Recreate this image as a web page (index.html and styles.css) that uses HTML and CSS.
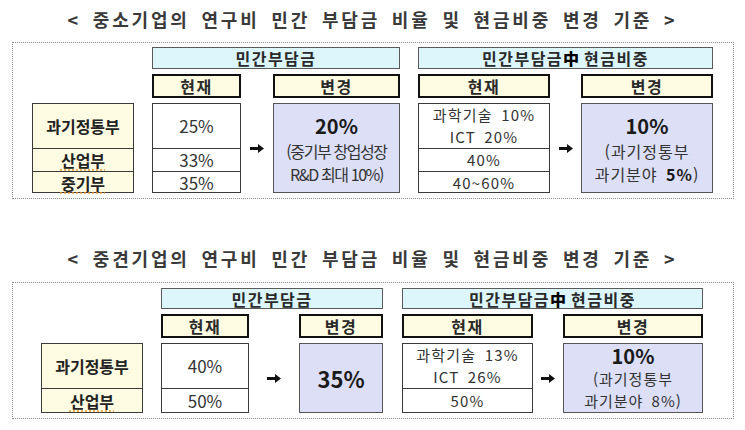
FILE: index.html
```html
<!DOCTYPE html>
<html lang="ko">
<head>
<meta charset="utf-8">
<link rel="stylesheet" href="styles.css">
</head>
<body>
<div class="page">
  <h2 class="title title1">&lt; 중소기업의 연구비 민간 부담금 비율 및 현금비중 변경 기준 &gt;</h2>
  <section class="panel p1">
    <div class="hd-main g1">민간부담금</div>
    <div class="hd-main g2">민간부담금<b>中</b> 현금비중</div>
    <div class="hd-sub c3">현재</div>
    <div class="hd-sub c5">변경</div>
    <div class="hd-sub c7">현재</div>
    <div class="hd-sub c9">변경</div>

    <div class="box labels c1">
      <div class="cell">과기정통부</div>
      <div class="cell"><span class="sq">산업부</span></div>
      <div class="cell"><span class="sq">중기부</span></div>
    </div>
    <div class="box data c3">
      <div class="cell">25%</div>
      <div class="cell">33%</div>
      <div class="cell">35%</div>
    </div>
    <div class="arrow c4"><svg width="14" height="9" viewBox="0 0 14 9"><path d="M0 3h8V0l6 4.5-6 4.5V6H0z" fill="#111"/></svg></div>
    <div class="chg c5">
      <div class="big">20%</div>
      <div class="small cond">(중기부 창업성장<br>R&amp;D 최대 10%)</div>
    </div>
    <div class="box data c7">
      <div class="cell wide">과학기술 10%<br>ICT 20%</div>
      <div class="cell wide">40%</div>
      <div class="cell wide">40~60%</div>
    </div>
    <div class="arrow c8"><svg width="14" height="9" viewBox="0 0 14 9"><path d="M0 3h8V0l6 4.5-6 4.5V6H0z" fill="#111"/></svg></div>
    <div class="chg c9">
      <div class="big">10%</div>
      <div class="small wide">(과기정통부<br>과기분야 <b>5%</b>)</div>
    </div>
  </section>

  <h2 class="title title2">&lt; 중견기업의 연구비 민간 부담금 비율 및 현금비중 변경 기준 &gt;</h2>
  <section class="panel p2">
    <div class="hd-main g1">민간부담금</div>
    <div class="hd-main g2">민간부담금<b>中</b> 현금비중</div>
    <div class="hd-sub c3">현재</div>
    <div class="hd-sub c5">변경</div>
    <div class="hd-sub c7">현재</div>
    <div class="hd-sub c9">변경</div>

    <div class="box labels c1">
      <div class="cell">과기정통부</div>
      <div class="cell"><span class="sq">산업부</span></div>
    </div>
    <div class="box data c3">
      <div class="cell">40%</div>
      <div class="cell">50%</div>
    </div>
    <div class="arrow c4"><svg width="14" height="9" viewBox="0 0 14 9"><path d="M0 3h8V0l6 4.5-6 4.5V6H0z" fill="#111"/></svg></div>
    <div class="chg c5">
      <div class="big big2">35%</div>
    </div>
    <div class="box data c7">
      <div class="cell wide">과학기술 13%<br>ICT 26%</div>
      <div class="cell wide">50%</div>
    </div>
    <div class="arrow c8"><svg width="14" height="9" viewBox="0 0 14 9"><path d="M0 3h8V0l6 4.5-6 4.5V6H0z" fill="#111"/></svg></div>
    <div class="chg c9 tight">
      <div class="big">10%</div>
      <div class="small wide">(과기정통부<br>과기분야 8%)</div>
    </div>
  </section>
</div>
</body>
</html>
```

FILE: styles.css
```css
* { box-sizing: border-box; }
html, body { margin: 0; padding: 0; background: #fff; }
body {
  width: 745px;
  height: 430px;
  overflow: hidden;
  font-family: "Noto Sans CJK KR", "Noto Sans", sans-serif;
  color: #222;
}
.page { display: flex; flex-direction: column; }

.title {
  margin: 0;
  height: 38px;
  line-height: 38px;
  text-align: center;
  font-size: 18px;
  font-weight: 700;
  color: #3a3a3a;
  letter-spacing: 2.8px;
  word-spacing: 4px;
}
.title1 { margin-bottom: 4px; }
.title2 { margin-top: 40px; margin-bottom: 5px; }

.panel {
  margin-left: 12px;
  width: 722px;
  border: 1px dotted #8a8a8a;
  display: grid;
  row-gap: 5px;
}
.p1 {
  height: 157px;
  padding: 4px 0 0 19px;
  grid-template-columns: 102px 18px 89px 32px 127px 18px 132px 31px 132px;
  grid-template-rows: 22px 24px 90px;
}
.p2 {
  height: 137px;
  padding: 5px 0 0 28px;
  grid-template-columns: 102px 18px 88px 50px 84px 19px 131px 30px 140px;
  grid-template-rows: 21px 24px 70px;
}

.g1 { grid-column: 3 / 6; grid-row: 1; }
.g2 { grid-column: 7 / 10; grid-row: 1; }
.c1, .c3, .c4, .c5, .c7, .c8, .c9 { grid-row: 3; }
.hd-sub.c3, .hd-sub.c5, .hd-sub.c7, .hd-sub.c9 { grid-row: 2; }
.c1 { grid-column: 1; }
.c3 { grid-column: 3; }
.c4 { grid-column: 4; }
.c5 { grid-column: 5; }
.c7 { grid-column: 7; }
.c8 { grid-column: 8; }
.c9 { grid-column: 9; }

.hd-main {
  background: #dcf6fb;
  border: 1px solid #5a5a5a;
  display: flex;
  align-items: center;
  justify-content: center;
  font-size: 16px;
  font-weight: 700;
  letter-spacing: 1.5px;
  color: #2a2a2a;
}
.hd-main b { color: #000; letter-spacing: 5px; }

.hd-sub {
  background: #fdfbe1;
  border: 2px solid #111;
  display: flex;
  align-items: center;
  justify-content: center;
  font-size: 16px;
  font-weight: 700;
  letter-spacing: 1.5px;
  color: #2a2a2a;
}

.box {
  border: 1px solid #3a3a3a;
  display: flex;
  flex-direction: column;
}
.box .cell:first-child { height: 44px; flex: none; }
.box .cell {
  flex: 1;
  display: flex;
  align-items: center;
  justify-content: center;
  text-align: center;
  line-height: 22px;
}
.box .cell + .cell { border-top: 1px solid #3a3a3a; }

.labels {
  background: #fdfbe1;
  font-size: 16px;
  font-weight: 700;
  color: #222;
}
.sq {
  text-decoration: underline dotted #e6a040;
  text-underline-offset: 3px;
}
.data {
  background: #fff;
  font-size: 17px;
  color: #333;
}
.data .wide { font-size: 15px; line-height: 22px; letter-spacing: 1.2px; word-spacing: 3px; }

.arrow {
  display: flex;
  align-items: center;
  justify-content: center;
}
.arrow svg { display: block; }

.chg {
  background: #dcdff6;
  border: 1px solid #555;
  display: flex;
  flex-direction: column;
  align-items: center;
  justify-content: center;
  text-align: center;
  color: #333;
}
.big {
  font-size: 20px;
  font-weight: 700;
  color: #1a1a1a;
  line-height: 29px;
}
.big2 { font-size: 22px; line-height: 32px; }
.small {
  font-size: 16px;
  line-height: 23px;
}
.small.cond { letter-spacing: -1.4px; white-space: nowrap; }
.small.wide { letter-spacing: 1px; word-spacing: 3px; }
.small b { font-weight: 700; color: #1a1a1a; }
.tight .big { line-height: 24px; }
.tight .small { font-size: 15px; line-height: 22px; }
```
